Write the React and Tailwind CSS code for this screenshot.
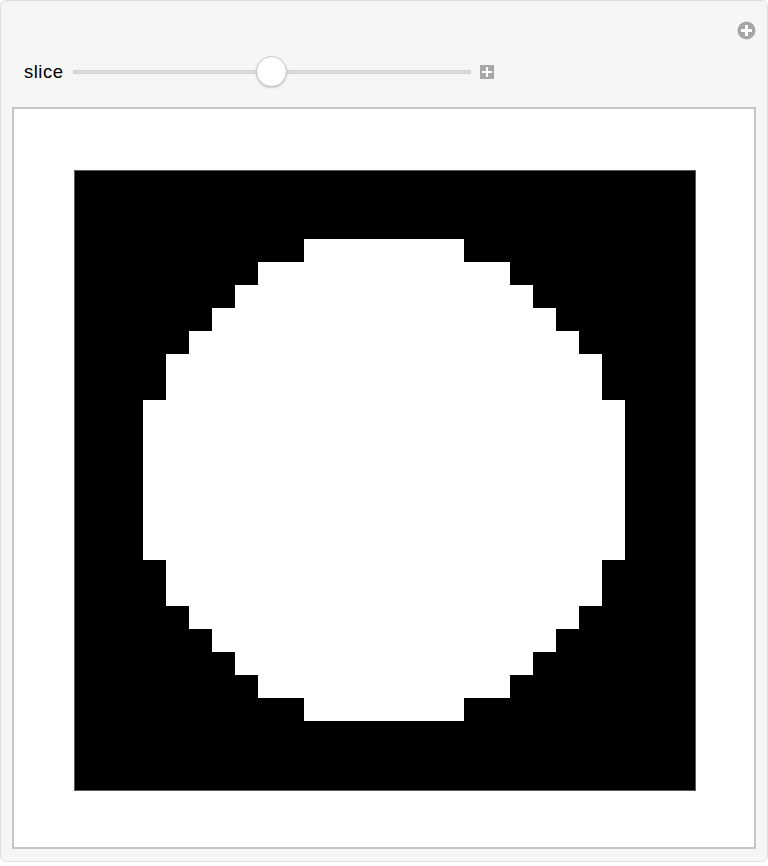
import React from "react";

const rows = {
  3: [10, 16],
  4: [8, 18],
  5: [7, 19],
  6: [6, 20],
  7: [5, 21],
  8: [4, 22],
  9: [4, 22],
  10: [3, 23],
  11: [3, 23],
  12: [3, 23],
  13: [3, 23],
  14: [3, 23],
  15: [3, 23],
  16: [3, 23],
  17: [4, 22],
  18: [4, 22],
  19: [5, 21],
  20: [6, 20],
  21: [7, 19],
  22: [8, 18],
  23: [10, 16],
};

const C = 620 / 27;

function Slice() {
  return (
    <svg width="622" height="621" viewBox="0 0 622 621" shapeRendering="crispEdges" className="block">
      <rect x="0" y="0" width="622" height="621" fill="#5a5a5a" />
      <rect x="1" y="1" width="620" height="619" fill="#000" />
      {Object.entries(rows).map(([r, [a, b]]) => (
        <rect
          key={r}
          x={Math.round(a * C)}
          y={Math.round(Number(r) * C)}
          width={Math.round((b + 1) * C) - Math.round(a * C)}
          height={Math.round((Number(r) + 1) * C) - Math.round(Number(r) * C)}
          fill="#fff"
        />
      ))}
    </svg>
  );
}

export default function App() {
  return (
    <div className="w-[768px] h-[866px] bg-white" style={{ fontFamily: '"Liberation Sans", Arial, sans-serif' }}>
      <div className="w-[768px] h-[862px] rounded-[6px] border border-[#dedede] bg-[#f6f6f6] flex flex-col">
        <div className="flex justify-end pt-[20px] pr-[11px]">
          <svg width="19" height="19" viewBox="0 0 19 19">
            <circle cx="9.5" cy="9.5" r="9" fill="#a6a6a6" />
            <rect x="8" y="4" width="3" height="11" fill="#fff" />
            <rect x="4" y="8" width="11" height="3" fill="#fff" />
          </svg>
        </div>
        <div className="flex items-center h-[32px] mt-[16px] pl-[23px]">
          <span className="text-[18.5px] tracking-[0.5px] text-black leading-none mr-[9px]">slice</span>
          <div className="relative w-[398px] h-[32px] flex items-center">
            <div className="w-full h-[4px] border border-[#d4d4d4] bg-[repeating-linear-gradient(90deg,#d0d0d0_0px,#d0d0d0_1px,#e6e6e6_1px,#e6e6e6_2px)]" />
            <div className="absolute left-[183px] top-0 w-[31px] h-[31px] rounded-full bg-white border border-[#c8c8c8] shadow-[0_1px_2px_rgba(0,0,0,0.2)]" />
          </div>
          <div className="ml-[9px] w-[14px] h-[14px] bg-[#a8a8a8] flex items-center justify-center relative">
            <div className="absolute w-[2px] h-[10px] bg-white" />
            <div className="absolute w-[10px] h-[2px] bg-white" />
          </div>
        </div>
        <div className="ml-[11px] mt-[19px] w-[744px] h-[742px] border-2 border-[#c6c6c6] bg-white">
          <div className="ml-[60px] mt-[61px]">
            <Slice />
          </div>
        </div>
      </div>
    </div>
  );
}
